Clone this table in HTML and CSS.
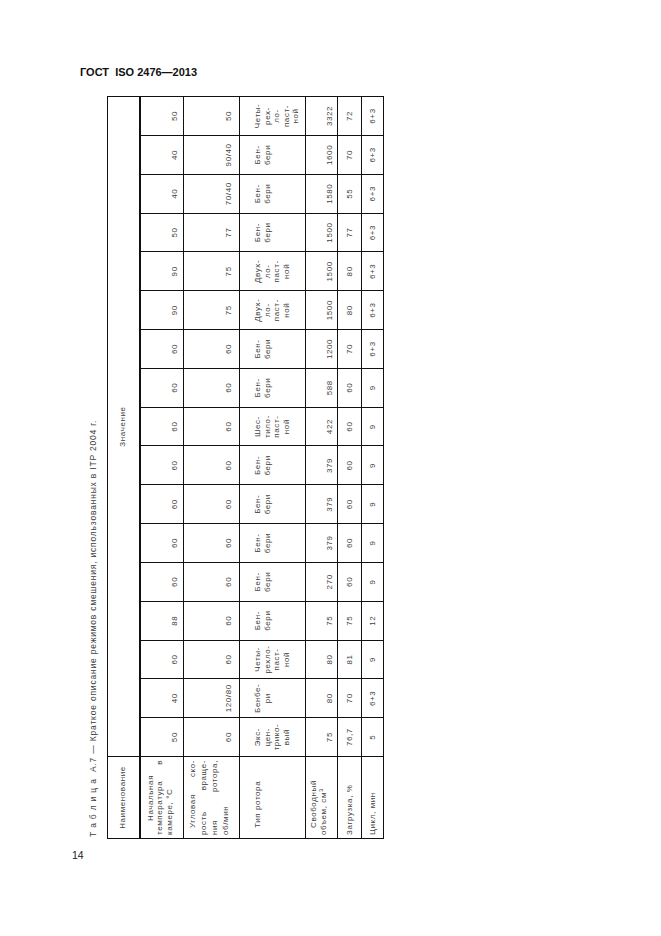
FILE: index.html
```html
<!DOCTYPE html>
<html lang="ru">
<head>
<meta charset="utf-8">
<title>ГОСТ ISO 2476—2013</title>
<link rel="stylesheet" href="styles.css">
</head>
<body>
<div class="page">
  <header class="doc-head">ГОСТ&nbsp; ISO 2476—2013</header>
  <div class="rot-frame">
    <div class="landscape">
      <p class="caption">Т а б л и ц а&nbsp; А.7 — Краткое описание режимов смешения, использованных в ITP 2004 г.</p>
      <table class="modes">
        <colgroup>
          <col class="c-name">
          <col><col><col><col><col><col><col><col><col><col><col><col><col><col><col><col><col>
        </colgroup>
        <thead>
          <tr class="r-head"><th>Наименование</th><th colspan="17">Значение</th></tr>
        </thead>
        <tbody>
          <tr class="r-temp">
            <th class="lbl"><span class="ln just ind-wide">Начальная</span><span class="ln just">температура в</span><span class="ln">камере, °С</span></th>
            <td>50</td><td>40</td><td>60</td><td>88</td><td>60</td><td>60</td><td>60</td><td>60</td><td>60</td><td>60</td><td>60</td><td>90</td><td>90</td><td>50</td><td>40</td><td>40</td><td>50</td>
          </tr>
          <tr class="r-speed">
            <th class="lbl"><span class="ln just ind">Угловая ско-</span><span class="ln just">рость враще-</span><span class="ln just">ния ротора,</span><span class="ln">об/мин</span></th>
            <td>60</td><td>120/80</td><td>60</td><td>60</td><td>60</td><td>60</td><td>60</td><td>60</td><td>60</td><td>60</td><td>60</td><td>75</td><td>75</td><td>77</td><td>70/40</td><td>90/40</td><td>50</td>
          </tr>
          <tr class="r-type">
            <th class="lbl"><span class="ln ind">Тип ротора</span></th>
            <td>Экс-<br>цен-<br>трико-<br>вый</td>
            <td>Бенбе-<br>ри</td>
            <td>Четы-<br>рехло-<br>паст-<br>ной</td>
            <td>Бен-<br>бери</td>
            <td>Бен-<br>бери</td>
            <td>Бен-<br>бери</td>
            <td>Бен-<br>бери</td>
            <td>Бен-<br>бери</td>
            <td>Шес-<br>тило-<br>паст-<br>ной</td>
            <td>Бен-<br>бери</td>
            <td>Бен-<br>бери</td>
            <td>Двух-<br>ло-<br>паст-<br>ной</td>
            <td>Двух-<br>ло-<br>паст-<br>ной</td>
            <td>Бен-<br>бери</td>
            <td>Бен-<br>бери</td>
            <td>Бен-<br>бери</td>
            <td>Четы-<br>рех-<br>ло-<br>паст-<br>ной</td>
          </tr>
          <tr class="r-vol">
            <th class="lbl"><span class="ln ind">Свободный</span><span class="ln">объем, см<sup>3</sup></span></th>
            <td>75</td><td>80</td><td>80</td><td>75</td><td>270</td><td>379</td><td>379</td><td>379</td><td>422</td><td>588</td><td>1200</td><td>1500</td><td>1500</td><td>1500</td><td>1580</td><td>1600</td><td>3322</td>
          </tr>
          <tr class="r-load">
            <th class="lbl"><span class="ln">Загрузка, %</span></th>
            <td>76,7</td><td>70</td><td>81</td><td>75</td><td>60</td><td>60</td><td>60</td><td>60</td><td>60</td><td>60</td><td>70</td><td>80</td><td>80</td><td>77</td><td>55</td><td>70</td><td>72</td>
          </tr>
          <tr class="r-cycle">
            <th class="lbl"><span class="ln">Цикл, мин</span></th>
            <td>5</td><td>6+3</td><td>9</td><td>12</td><td>9</td><td>9</td><td>9</td><td>9</td><td>9</td><td>9</td><td>6+3</td><td>6+3</td><td>6+3</td><td>6+3</td><td>6+3</td><td>6+3</td><td>6+3</td>
          </tr>
        </tbody>
      </table>
    </div>
  </div>
  <div class="page-num">14</div>
</div>
</body>
</html>
```
FILE: styles.css
```css
html, body {
  margin: 0;
  padding: 0;
  background: #ffffff;
}

.page {
  width: 661px;
  height: 936px;
  overflow: hidden;
  font-family: "Liberation Sans", Arial, sans-serif;
  color: #404040;
}

.doc-head {
  padding: 66px 0 0 80px;
  font-size: 11px;
  line-height: 13px;
  font-weight: bold;
  color: #111111;
}

.rot-frame {
  width: 300px;
  height: 744px;
  margin: 16px 0 0 84px;
}

.landscape {
  width: 744px;
  height: 300px;
  transform-origin: 0 0;
  transform: rotate(-90deg) translateX(-100%);
}

.caption {
  margin: 0;
  padding-top: 2px;
  padding-left: 2px;
  height: 14px;
  line-height: 14px;
  font-size: 8.5px;
  letter-spacing: 0.8px;
  white-space: nowrap;
  color: #404040;
}

.modes {
  margin-top: 7px;
  width: 743px;
  table-layout: fixed;
  border-collapse: collapse;
  font-size: 8px;
  letter-spacing: 0.6px;
  line-height: 10px;
}

.c-name {
  width: 82px;
}

.modes th,
.modes td {
  border: 1px solid #111111;
  padding: 2px 3px;
  font-weight: normal;
  text-align: center;
  vertical-align: middle;
}

.modes thead th {
  border-bottom: 2px solid #111111;
}

.modes .lbl {
  text-align: left;
  vertical-align: top;
}

.ln {
  display: block;
}

.just {
  text-align: justify;
  text-align-last: justify;
}

.ind {
  padding-left: 7px;
}

.ind-wide {
  padding-left: 14px;
}

.r-head { height: 32px; }

.r-temp { height: 44px; }
.r-temp .lbl { padding-top: 5px; line-height: 9.8px; }
.r-temp td { vertical-align: bottom; padding-bottom: 3px; }

.r-speed { height: 56px; }
.r-speed .lbl { padding-top: 3px; line-height: 11px; }
.r-speed td { vertical-align: bottom; padding-bottom: 5px; }

.r-type { height: 66px; }
.r-type th,
.r-type td { vertical-align: top; padding-top: 13px; line-height: 9.5px; }

.r-vol { height: 32px; }
.r-vol .lbl { padding-top: 3px; }
.r-vol td { vertical-align: bottom; padding-bottom: 2px; }

.r-load { height: 24px; }
.r-load .lbl { vertical-align: middle; }

.r-cycle { height: 22px; }
.r-cycle .lbl { vertical-align: middle; }

sup {
  font-size: 6px;
  line-height: 0;
  vertical-align: 3px;
}

.page-num {
  margin: 10px 0 0 72px;
  font-size: 10.5px;
  line-height: 12px;
  color: #222222;
}
```
